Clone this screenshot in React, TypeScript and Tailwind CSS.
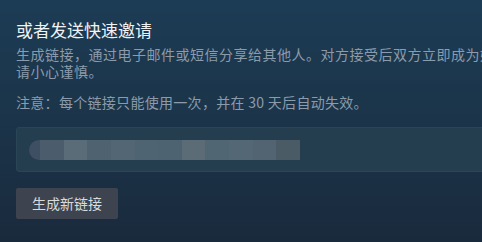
import React from 'react';

const font = { fontFamily: '"Noto Sans CJK SC", "Noto Sans", sans-serif' };

function BlurredLink() {
  // the link text in the screenshot is pixelated out, so draw it as grey blocks
  const blocks = ['#4b5d6c', '#5a6c77', '#4f6270', '#526673', '#4f6472', '#4e6371', '#5b6c77', '#506673', '#536775', '#526471', '#4a5b66'];
  return (
    <div className="flex h-[20px] w-[271px] overflow-hidden rounded-l-[10px] blur-[0.6px]">
      <div className="w-[11px] bg-[#3f4f63]" />
      {blocks.map((c, i) => (
        <div key={i} className="flex-1" style={{ backgroundColor: c }} />
      ))}
    </div>
  );
}

export default function App() {
  return (
    <div
      className="h-[242px] w-[482px] overflow-hidden bg-gradient-to-b from-[#1c3c55] via-[#1b3449] to-[#1a2a3d] pl-4 pt-5"
      style={font}
    >
      <div className="text-[17px] leading-[20px] text-[#f0f2f4]">或者发送快速邀请</div>
      <p className="mt-[6px] w-[540px] text-[14px] leading-[17px] tracking-[0.5px] text-[#8c9bab]">
        生成链接，通过电子邮件或短信分享给其他人。对方接受后双方立即成为好友。
        <br />
        请小心谨慎。
      </p>
      <p className="mt-[14px] text-[14px] leading-[17px] tracking-[0.3px] text-[#8c9bab]">
        注意：每个链接只能使用一次，并在 30 天后自动失效。
      </p>
      <div className="mt-[16px] flex h-[45px] w-[560px] items-center rounded-[3px] border border-[#2a4556] bg-[#243e50] pl-[12px]">
        <BlurredLink />
      </div>
      <button className="mt-[16px] h-[31px] rounded-[2px] bg-[#3d4450] px-4 text-[14px] text-[#d8dbde]">
        生成新链接
      </button>
    </div>
  );
}
